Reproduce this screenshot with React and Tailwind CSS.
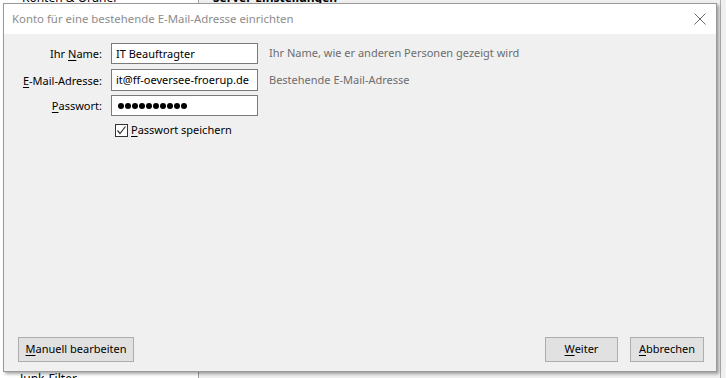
import React from "react";

function U({ children }) {
  return <span className="underline underline-offset-2">{children}</span>;
}

export default function App() {
  return (
    <div
      className="relative w-[726px] h-[378px] overflow-hidden bg-[#f0f0f0] text-[11px] text-black"
      style={{ fontFamily: '"Noto Sans", "Segoe UI", sans-serif' }}
    >
      {/* background window content */}
      <div className="absolute left-0 top-0 w-[198px] h-[378px] bg-white" />
      <div className="absolute left-[198px] top-0 w-[1px] h-[378px] bg-[#a0a0a0]" />
      <div className="absolute left-[22px] top-[-11px] text-[12px] text-black whitespace-nowrap">Konten &amp; Ordner</div>
      <div className="absolute left-[213px] top-[-11px] text-[12px] font-bold text-black whitespace-nowrap">Server-Einstellungen</div>
      <div className="absolute left-[20px] top-[370px] text-[12px] text-black whitespace-nowrap">Junk-Filter</div>
      <div className="absolute left-[720px] top-0 w-[1px] h-[378px] bg-[#b0b0b0]" />

      {/* dialog */}
      <div className="absolute left-[3px] top-[3px] w-[714px] h-[369px] flex flex-col border border-[#9a9a9a] bg-[#f0f0f0] shadow-[2px_2px_3px_rgba(0,0,0,0.35)]">
        <div className="h-[30px] bg-white flex items-center justify-between pl-[8px] pr-[8px] shrink-0">
          <span className="text-[11.4px] text-[#8c8c8c] whitespace-nowrap">Konto für eine bestehende E-Mail-Adresse einrichten</span>
          <svg width="12" height="12" viewBox="0 0 12 12" className="mr-[2px]">
            <path d="M0.5 0.5 L11.5 11.5 M11.5 0.5 L0.5 11.5" stroke="#6b6b6b" strokeWidth="1" fill="none" />
          </svg>
        </div>
        <div className="flex-1 flex flex-col pt-[9px] pb-[9px] pl-[14px] pr-[12px]">
          <div className="grid grid-cols-[84px_147px_auto] gap-x-[9px] gap-y-[4px] items-center">
            <div className="text-right leading-[21px] whitespace-nowrap">Ihr <U>N</U>ame:</div>
            <div className="h-[21px] border border-[#7a7a7a] bg-white px-[4px] leading-[19px] whitespace-nowrap overflow-hidden">IT Beauftragter</div>
            <div className="text-[#6d6d6d] pl-[2px] whitespace-nowrap">Ihr Name, wie er anderen Personen gezeigt wird</div>

            <div className="text-right leading-[21px] mt-[1px] whitespace-nowrap"><U>E</U>-Mail-Adresse:</div>
            <div className="h-[22px] mt-[1px] border border-[#7a7a7a] bg-white px-[4px] leading-[20px] whitespace-nowrap overflow-hidden">it@ff-oeversee-froerup.de</div>
            <div className="text-[#6d6d6d] pl-[2px] mt-[1px] whitespace-nowrap">Bestehende E-Mail-Adresse</div>

            <div className="text-right leading-[21px] whitespace-nowrap"><U>P</U>asswort:</div>
            <div className="h-[21px] border border-[#7a7a7a] bg-white px-[6px] flex items-center gap-[1px]">
              {Array.from({ length: 10 }).map((_, i) => (
                <span key={i} className="inline-block w-[6px] h-[6px] rounded-full bg-black" />
              ))}
            </div>
            <div />
          </div>
          <div className="flex items-center mt-[6px] ml-[97px]">
            <div className="w-[13px] h-[13px] border border-[#333] bg-white flex items-center justify-center">
              <svg width="11" height="11" viewBox="0 0 11 11">
                <path d="M1.5 5.5 L4 8.5 L9.5 1.5" stroke="#333" strokeWidth="1.2" fill="none" />
              </svg>
            </div>
            <span className="ml-[3px] whitespace-nowrap"><U>P</U>asswort speichern</span>
          </div>
          <div className="flex-1" />
          <div className="flex items-center">
            <button className="h-[25px] w-[116px] border border-[#adadad] bg-[#e1e1e1] text-[11px] whitespace-nowrap">
              <U>M</U>anuell bearbeiten
            </button>
            <div className="flex-1" />
            <button className="h-[25px] w-[73px] border border-[#adadad] bg-[#e1e1e1] text-[11px]">
              <U>W</U>eiter
            </button>
            <button className="h-[25px] w-[74px] ml-[12px] border border-[#adadad] bg-[#e1e1e1] text-[11px]">
              <U>A</U>bbrechen
            </button>
          </div>
        </div>
      </div>
    </div>
  );
}
